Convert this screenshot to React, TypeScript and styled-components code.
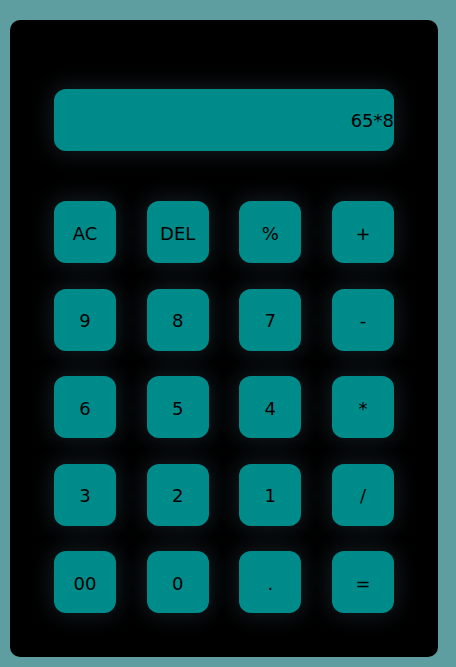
import React from "react";
import styled, { createGlobalStyle } from "styled-components";

const Global = createGlobalStyle`
  html, body { margin: 0; padding: 0; }
  body {
    background: #5f9ea0;
    width: 456px;
    height: 667px;
    overflow: hidden;
  }
`;

const Page = styled.div`
  padding: 20px 18px 10px 10px;
  box-sizing: border-box;
  height: 667px;
`;

const Calculator = styled.div`
  width: 428px;
  height: 637px;
  background: #000;
  border-radius: 10px;
  box-sizing: border-box;
  padding: 69px 44px 0 44px;
  display: flex;
  flex-direction: column;
  gap: 50px;
`;

const glow = "0 0 22px 3px rgba(90, 140, 165, 0.2)";

const Display = styled.div`
  height: 62px;
  background: #008b8b;
  border-radius: 12px;
  box-shadow: ${glow};
  display: flex;
  align-items: center;
  justify-content: flex-end;
  box-sizing: border-box;
  font-family: "DejaVu Sans", sans-serif;
  font-size: 18px;
  color: #000;
  overflow: hidden;
`;

const Keys = styled.div`
  display: grid;
  grid-template-columns: repeat(4, 62px);
  grid-auto-rows: 62px;
  column-gap: 30.67px;
  row-gap: 25.5px;
`;

const Key = styled.button`
  border: none;
  margin: 0;
  padding: 2px 0 0 0;
  background: #008b8b;
  border-radius: 12px;
  box-shadow: ${glow};
  font-family: "Comic Sans MS", "DejaVu Sans", sans-serif;
  font-size: 18px;
  color: #000;
  display: flex;
  align-items: center;
  justify-content: center;
  cursor: pointer;
`;

const keys = [
  "AC", "DEL", "%", "+",
  "9", "8", "7", "-",
  "6", "5", "4", "*",
  "3", "2", "1", "/",
  "00", "0", ".", "=",
];

export default function App() {
  return (
    <>
      <Global />
      <Page>
        <Calculator>
          <Display>65*8</Display>
          <Keys>
            {keys.map((k) => (
              <Key key={k}>{k}</Key>
            ))}
          </Keys>
        </Calculator>
      </Page>
    </>
  );
}
